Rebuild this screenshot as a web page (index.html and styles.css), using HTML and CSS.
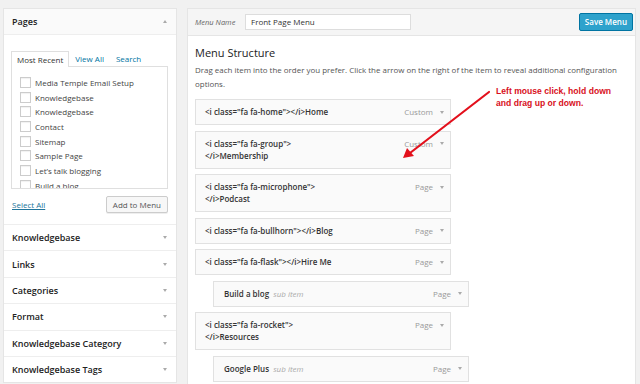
FILE: index.html
```html
<!DOCTYPE html>
<html lang="en">
<head>
	<meta charset="UTF-8">
	<title>Menus</title>
	<link rel="stylesheet" href="styles.css">
</head>
<body>
	<div class="wrap">
		<div class="side">
			<div class="box-head open">
				<span>Pages</span>
				<span class="arr up"></span>
			</div>
			<div class="box-body">
				<div class="tabs">
					<span class="tab active">Most Recent</span>
					<span class="tab">View All</span>
					<span class="tab">Search</span>
				</div>
				<div class="tab-panel">
					<label class="check"><span class="box"></span>Media Temple Email Setup</label>
					<label class="check"><span class="box"></span>Knowledgebase</label>
					<label class="check"><span class="box"></span>Knowledgebase</label>
					<label class="check"><span class="box"></span>Contact</label>
					<label class="check"><span class="box"></span>Sitemap</label>
					<label class="check"><span class="box"></span>Sample Page</label>
					<label class="check"><span class="box"></span>Let’s talk blogging</label>
					<label class="check"><span class="box"></span>Build a blog</label>
				</div>
				<div class="box-foot">
					<a class="select-all">Select All</a>
					<span class="btn">Add to Menu</span>
				</div>
			</div>
			<div class="box-head"><span>Knowledgebase</span><span class="arr"></span></div>
			<div class="box-head"><span>Links</span><span class="arr"></span></div>
			<div class="box-head"><span>Categories</span><span class="arr"></span></div>
			<div class="box-head"><span>Format</span><span class="arr"></span></div>
			<div class="box-head"><span>Knowledgebase Category</span><span class="arr"></span></div>
			<div class="box-head"><span>Knowledgebase Tags</span><span class="arr"></span></div>
		</div>

		<div class="main">
			<div class="main-head">
				<span class="name-label">Menu Name</span>
				<span class="name-input">Front Page Menu</span>
				<span class="save">Save Menu</span>
			</div>
			<div class="main-body">
				<h3>Menu Structure</h3>
				<p class="desc">Drag each item into the order you prefer. Click the arrow on the right of the item to reveal additional configuration options.</p>

				<div class="item"><span class="title">&lt;i class="fa fa-home"&gt;&lt;/i&gt;Home</span><span class="type">Custom<span class="arr"></span></span></div>
				<div class="item"><span class="title">&lt;i class="fa fa-group"&gt;<br>&lt;/i&gt;Membership</span><span class="type">Custom<span class="arr"></span></span></div>
				<div class="item"><span class="title">&lt;i class="fa fa-microphone"&gt;<br>&lt;/i&gt;Podcast</span><span class="type">Page<span class="arr"></span></span></div>
				<div class="item"><span class="title">&lt;i class="fa fa-bullhorn"&gt;&lt;/i&gt;Blog</span><span class="type">Page<span class="arr"></span></span></div>
				<div class="item"><span class="title">&lt;i class="fa fa-flask"&gt;&lt;/i&gt;Hire Me</span><span class="type">Page<span class="arr"></span></span></div>
				<div class="item sub"><span class="title">Build a blog <em>sub item</em></span><span class="type">Page<span class="arr"></span></span></div>
				<div class="item"><span class="title">&lt;i class="fa fa-rocket"&gt;<br>&lt;/i&gt;Resources</span><span class="type">Page<span class="arr"></span></span></div>
				<div class="item sub"><span class="title">Google Plus <em>sub item</em></span><span class="type">Page<span class="arr"></span></span></div>
			</div>
		</div>
	</div>

	<div class="note">Left mouse click, hold down<br>and drag up or down.</div>
	<svg class="pointer" width="640" height="384" viewBox="0 0 640 384">
		<line x1="489" y1="92" x2="410" y2="153" stroke="#e3101c" stroke-width="2.2" stroke-linecap="round"/>
		<polygon points="403,158 407,148 414,156" fill="#e3101c"/>
	</svg>
</body>
</html>
```

FILE: styles.css
```css
body {
	margin: 0;
	background: #f1f1f1;
	font-family: "Open Sans", "DejaVu Sans", sans-serif;
	color: #333;
	overflow: hidden;
	height: 384px;
}

.wrap {
	display: flex;
	gap: 10px;
	padding: 8px 4px 0 3px;
	align-items: flex-start;
	height: 376px;
	overflow: hidden;
}

/* left column */
.side {
	width: 174px;
	flex: none;
	background: #fff;
	border: 1px solid #e5e5e5;
	box-sizing: border-box;
}

.box-head {
	height: 26.4px;
	box-sizing: border-box;
	display: flex;
	align-items: center;
	justify-content: space-between;
	padding: 0 9px 0 8px;
	font-size: 9px;
	font-weight: 600;
	color: #222;
	border-top: 1px solid #eee;
}
.box-head:first-child {
	border-top: 0;
	height: 26px;
	background: #fafafa;
	border-bottom: 1px solid #eee;
}

.arr {
	display: inline-block;
	width: 0;
	height: 0;
	border-left: 2.5px solid transparent;
	border-right: 2.5px solid transparent;
	border-top: 3px solid #aaa;
}
.arr.up {
	border-top: 0;
	border-bottom: 3px solid #aaa;
}

.box-body {
	padding: 15px 8px 11px 7px;
	font-size: 8px;
}

.tabs {
	display: flex;
	align-items: flex-end;
	height: 16px;
}
.tab {
	padding: 0 6px;
	line-height: 15px;
	color: #0074a2;
}
.tab.active {
	color: #333;
	border: 1px solid #dfdfdf;
	border-bottom: 0;
	background: #fff;
	position: relative;
	top: 1px;
	padding: 0 5px;
}

.tab-panel {
	border: 1px solid #dfdfdf;
	height: 123px;
	box-sizing: border-box;
	overflow: hidden;
	padding: 8px 0 0 8px;
}

.check {
	display: flex;
	align-items: center;
	height: 14.7px;
	color: #444;
}
.box {
	width: 9px;
	height: 9px;
	border: 1px solid #ccc;
	box-shadow: inset 0 1px 1px rgba(0,0,0,.06);
	margin-right: 4px;
}

.box-foot {
	display: flex;
	justify-content: space-between;
	align-items: center;
	margin-top: 7px;
}
.select-all {
	color: #21759b;
	text-decoration: underline;
	padding-left: 1px;
}
.btn {
	border: 1px solid #ccc;
	background: #f7f7f7;
	border-radius: 2px;
	padding: 0 6px;
	line-height: 15px;
	color: #555;
	box-shadow: 0 1px 0 #eee;
}

/* right column */
.main {
	flex: 1;
	background: #fff;
	border: 1px solid #e5e5e5;
	height: 400px;
}

.main-head {
	height: 26px;
	background: #f5f5f5;
	border-bottom: 1px solid #e5e5e5;
	display: flex;
	align-items: center;
	padding: 0 2px 0 7px;
}
.name-label {
	font-size: 7.5px;
	font-style: italic;
	color: #666;
	width: 50px;
}
.name-input {
	width: 166px;
	height: 16px;
	box-sizing: border-box;
	border: 1px solid #ddd;
	background: #fff;
	font-size: 8px;
	line-height: 14px;
	padding-left: 5px;
	color: #333;
}
.save {
	margin-left: auto;
	background: #2ea2cc;
	border: 1px solid #0074a2;
	border-radius: 2px;
	color: #fff;
	font-size: 8px;
	font-weight: 600;
	line-height: 16px;
	padding: 0 5px;
}

.main-body {
	padding: 0 7px 0 7px;
}
h3 {
	margin: 9px 0 0;
	font-size: 11px;
	font-weight: 400;
	color: #222;
	line-height: 16px;
}
.desc {
	margin: 2px 0 8px;
	font-size: 7.95px;
	line-height: 14px;
	color: #555;
}

.item {
	width: 256px;
	box-sizing: border-box;
	border: 1px solid #e1e1e1;
	background: #fafafa;
	display: flex;
	justify-content: space-between;
	padding: 6px 6px 6px 9px;
	margin-bottom: 5.5px;
	font-size: 8px;
	line-height: 12px;
}
.item.sub {
	margin-left: 18px;
	padding-left: 10px;
}
.title {
	font-weight: 600;
	color: #333;
}
.title em {
	font-weight: 400;
	color: #aaa;
	margin-left: 2px;
}
.type {
	color: #999;
	display: flex;
	align-items: center;
	height: 12px;
}
.type .arr {
	margin-left: 7px;
}

/* annotation */
.note {
	position: absolute;
	left: 496px;
	top: 86px;
	font-family: "Liberation Sans", Arial, sans-serif;
	font-weight: 700;
	font-size: 8.6px;
	line-height: 11.5px;
	color: #d8101c;
}
.pointer {
	position: absolute;
	left: 0;
	top: 0;
	pointer-events: none;
}
```
